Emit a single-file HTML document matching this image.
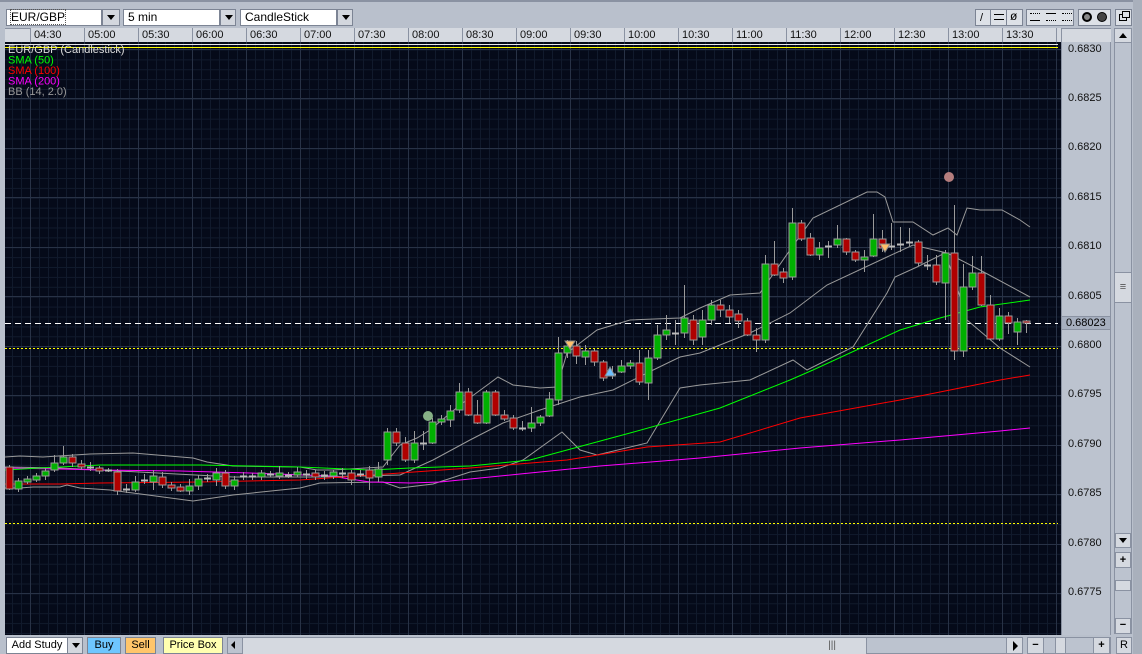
<!DOCTYPE html>
<html><head><meta charset="utf-8"><style>
*{margin:0;padding:0;box-sizing:border-box}
body{width:1142px;height:654px;background:#b9c0cc;font-family:"Liberation Sans",sans-serif;font-size:11px;color:#000;position:relative;overflow:hidden}
.a{position:absolute}
.box{position:absolute;background:#fff;border:1px solid #7c8494;padding-left:4px;line-height:15px;font-size:12px}
.arr{position:absolute;background:#d3d7de;border:1px solid #7c8494}
.arr:after{content:"";position:absolute;left:4px;top:5px;border-left:4px solid transparent;border-right:4px solid transparent;border-top:5px solid #000}
.btn{position:absolute;border:1px solid #7c8494;text-align:center;line-height:15px;font-size:11px}
.tl{position:absolute;top:28px;height:14px;border-left:1px solid #8a92a2;background:#d5d9e0;font-size:11px;line-height:14px;padding-left:3px;color:#111}
.pl{position:absolute;left:1068px;font-size:11px;color:#111}
</style></head><body>
<div class="a" style="left:0;top:0;width:1142px;height:2px;background:#8a92a2"></div>
<div class="a" style="left:1133px;top:0;width:9px;height:654px;background:#a9b0bc"></div>
<div class="box" style="left:6px;top:9px;width:96px;height:17px"><span style="outline:1px dotted #555">EUR/GBP</span></div>
<div class="arr" style="left:102px;top:9px;width:18px;height:17px"></div>
<div class="box" style="left:123px;top:9px;width:97px;height:17px">5 min</div>
<div class="arr" style="left:220px;top:9px;width:16px;height:17px"></div>
<div class="box" style="left:240px;top:9px;width:97px;height:17px">CandleStick</div>
<div class="arr" style="left:337px;top:9px;width:16px;height:17px"></div>
<div class="a" style="left:975px;top:9px;width:48px;height:17px;background:#dde1e7;border:1px solid #7c8494"></div>
<div class="a" style="left:990px;top:9px;width:1px;height:17px;background:#7c8494"></div>
<div class="a" style="left:1006px;top:9px;width:1px;height:17px;background:#7c8494"></div>
<div class="a" style="left:980px;top:12px;font-size:11px">/</div>
<div class="a" style="left:994px;top:14px;width:10px;border-top:1px solid #000;border-bottom:1px solid #000;height:6px"></div>
<div class="a" style="left:1010px;top:9px;font-size:12px">ø</div>
<div class="a" style="left:1026px;top:9px;width:48px;height:17px;background:#dde1e7;border:1px solid #7c8494"></div>
<div class="a" style="left:1030px;top:13px;width:10px;height:8px;border-top:1px dotted #000;border-bottom:1px solid #000"></div>
<div class="a" style="left:1046px;top:13px;width:10px;height:8px;border-top:1px solid #000;border-bottom:1px dotted #000"></div>
<div class="a" style="left:1062px;top:13px;width:10px;height:8px;border-top:1px dotted #000;border-bottom:1px dotted #000"></div>
<div class="a" style="left:1078px;top:9px;width:33px;height:17px;background:#dde1e7;border:1px solid #7c8494"></div>
<div class="a" style="left:1082px;top:12px;width:10px;height:10px;border-radius:50%;border:2px solid #000;background:#888"></div>
<div class="a" style="left:1097px;top:12px;width:10px;height:10px;border-radius:50%;border:1px solid #000;background:#444"></div>
<div class="a" style="left:1115px;top:9px;width:17px;height:17px;background:#dde1e7;border:1px solid #7c8494"></div>
<div class="a" style="left:1119px;top:14px;width:8px;height:7px;border:1px solid #000"></div>
<div class="a" style="left:1122px;top:11px;width:8px;height:7px;border:1px solid #000;background:#dde1e7"></div>
<div class="a" style="left:5px;top:28px;width:1106px;height:14px;background:#d5d9e0;border-top:1px solid #8a92a2"></div>
<div class="tl" style="left:30px;width:54px">04:30</div><div class="tl" style="left:84px;width:54px">05:00</div><div class="tl" style="left:138px;width:54px">05:30</div><div class="tl" style="left:192px;width:54px">06:00</div><div class="tl" style="left:246px;width:54px">06:30</div><div class="tl" style="left:300px;width:54px">07:00</div><div class="tl" style="left:354px;width:54px">07:30</div><div class="tl" style="left:408px;width:54px">08:00</div><div class="tl" style="left:462px;width:54px">08:30</div><div class="tl" style="left:516px;width:54px">09:00</div><div class="tl" style="left:570px;width:54px">09:30</div><div class="tl" style="left:624px;width:54px">10:00</div><div class="tl" style="left:678px;width:54px">10:30</div><div class="tl" style="left:732px;width:54px">11:00</div><div class="tl" style="left:786px;width:54px">11:30</div><div class="tl" style="left:840px;width:54px">12:00</div><div class="tl" style="left:894px;width:54px">12:30</div><div class="tl" style="left:948px;width:54px">13:00</div><div class="tl" style="left:1002px;width:54px">13:30</div><div class="tl" style="left:1056px;width:5px"></div>
<div class="a" style="left:1061px;top:28px;width:1px;height:14px;background:#8a92a2"></div>
<div class="a" style="left:1061px;top:42px;width:50px;height:593px;background:#bcc3cf;border-left:1px solid #8a92a2;border-right:1px solid #8a92a2"></div>
<div class="pl" style="top:43px">0.6830</div><div class="pl" style="top:92px">0.6825</div><div class="pl" style="top:141px">0.6820</div><div class="pl" style="top:191px">0.6815</div><div class="pl" style="top:240px">0.6810</div><div class="pl" style="top:290px">0.6805</div><div class="pl" style="top:339px">0.6800</div><div class="pl" style="top:388px">0.6795</div><div class="pl" style="top:438px">0.6790</div><div class="pl" style="top:487px">0.6785</div><div class="pl" style="top:537px">0.6780</div><div class="pl" style="top:586px">0.6775</div>
<div class="a" style="left:1062px;top:316px;width:48px;height:14px;background:#a6afbf;border-top:1px solid #8a92a2;border-bottom:1px solid #8a92a2;font-size:11px;line-height:12px;padding-left:4px">0.68023</div>
<div class="a" style="left:1114px;top:28px;width:18px;height:606px;background:#bcc3cf;border:1px solid #8a92a2"></div>
<div class="a" style="left:1115px;top:29px;width:16px;height:14px;background:#d5d9e0;border-bottom:1px solid #8a92a2"></div>
<div class="a" style="left:1119px;top:33px;border-left:4px solid transparent;border-right:4px solid transparent;border-bottom:5px solid #000"></div>
<div class="a" style="left:1115px;top:272px;width:16px;height:31px;background:#d5d9e0;border-top:1px solid #8a92a2;border-bottom:1px solid #8a92a2;text-align:center;line-height:28px;color:#555">≡</div>
<div class="a" style="left:1115px;top:533px;width:16px;height:15px;background:#d5d9e0;border:1px solid #8a92a2"></div>
<div class="a" style="left:1119px;top:538px;border-left:4px solid transparent;border-right:4px solid transparent;border-top:5px solid #000"></div>
<div class="a" style="left:1115px;top:552px;width:16px;height:16px;background:#d5d9e0;border:1px solid #8a92a2;text-align:center;font-weight:bold;line-height:14px">+</div>
<div class="a" style="left:1115px;top:580px;width:16px;height:11px;background:#d5d9e0;border:1px solid #8a92a2"></div>
<div class="a" style="left:1115px;top:618px;width:16px;height:16px;background:#d5d9e0;border:1px solid #8a92a2;text-align:center;font-weight:bold;line-height:13px">−</div>
<div class="btn" style="left:6px;top:637px;width:62px;height:17px;background:#fff">Add Study</div>
<div class="arr" style="left:67px;top:637px;width:16px;height:17px"></div>
<div class="btn" style="left:87px;top:637px;width:34px;height:17px;background:#6ec6ff">Buy</div>
<div class="btn" style="left:125px;top:637px;width:31px;height:17px;background:#ffc56a">Sell</div>
<div class="btn" style="left:163px;top:637px;width:60px;height:17px;background:#ffffb0">Price Box</div>
<div class="a" style="left:227px;top:637px;width:781px;height:17px;background:#bcc3cf;border:1px solid #8a92a2"></div>
<div class="a" style="left:242px;top:638px;width:625px;height:16px;background:#d5d9e0;border-right:1px solid #8a92a2;text-align:right;padding-right:30px;line-height:15px;color:#555;font-size:10px">|||</div>
<div class="a" style="left:231px;top:641px;border-top:4px solid transparent;border-bottom:4px solid transparent;border-right:4px solid #000"></div>
<div class="a" style="left:242px;top:637px;width:1px;height:17px;background:#8a92a2"></div>
<div class="a" style="left:1006px;top:637px;width:17px;height:17px;background:#d5d9e0;border:1px solid #8a92a2"></div>
<div class="a" style="left:1013px;top:641px;border-top:5px solid transparent;border-bottom:5px solid transparent;border-left:5px solid #000"></div>
<div class="a" style="left:1027px;top:637px;width:84px;height:17px;background:#bcc3cf;border:1px solid #8a92a2"></div>
<div class="a" style="left:1027px;top:637px;width:17px;height:17px;background:#d5d9e0;border:1px solid #8a92a2;text-align:center;font-weight:bold;line-height:14px">−</div>
<div class="a" style="left:1055px;top:637px;width:11px;height:17px;background:#d5d9e0;border:1px solid #8a92a2"></div>
<div class="a" style="left:1093px;top:637px;width:17px;height:17px;background:#d5d9e0;border:1px solid #8a92a2;text-align:center;font-weight:bold;line-height:14px">+</div>
<div class="a" style="left:1116px;top:637px;width:16px;height:17px;background:#d5d9e0;border:1px solid #8a92a2;text-align:center;line-height:15px">R</div>
<svg class="a" style="left:5px;top:42px" width="1056" height="593" viewBox="5 42 1056 593" id="ch">
<defs>
<pattern id="mg" x="3" y="0" width="9" height="9.89" patternUnits="userSpaceOnUse"><rect width="9" height="9.89" fill="#050a19"/><path d="M0.5 0V9.89M0 0.5H9" stroke="#111a2c" stroke-width="1"/></pattern>
</defs>
<rect x="5" y="42" width="1056" height="593" fill="url(#mg)"/>
<g id="maj" stroke="#283246" stroke-width="1"></g>
<line x1="5" y1="44.5" x2="1058" y2="44.5" stroke="#e8e8e8"/>
<line x1="5" y1="47.5" x2="1058" y2="47.5" stroke="#ffff00"/>
<line x1="5" y1="348.5" x2="1058" y2="348.5" stroke="#ffff00" stroke-dasharray="2,2"/>
<line x1="5" y1="523.5" x2="1058" y2="523.5" stroke="#ffff00" stroke-dasharray="2,2"/>
<line x1="5" y1="323.5" x2="1058" y2="323.5" stroke="#ffffff" stroke-dasharray="6,4"/>
<g fill="none" stroke-width="1">
<polyline stroke="#9a9a9a" points="5,457 20,456 43,457 90,454 133,453 193,458 207,462 233,466 300,467 317,470 333,470 383,467 400,445 417,438 430,430 460,405 490,383 498,377 513,385 540,388 557,387 567,353 597,330 630,320 680,318 700,308 730,295 760,293 790,250 813,218 867,192 877,192 885,197 893,222 913,222 933,235 948,228 957,235 967,208 980,210 1002,210 1020,220 1030,227"/>
<polyline stroke="#9a9a9a" points="5,467 60,468 100,470 233,477 320,477 400,475 433,460 470,440 503,423 540,410 580,397 613,390 647,373 680,357 700,353 750,333 790,313 827,285 887,257 913,245 947,253 980,270 1030,297"/>
<polyline stroke="#9a9a9a" points="5,488 20,488 33,487 60,487 67,485 80,488 110,490 133,493 193,501 233,495 300,488 320,483 383,482 400,488 433,484 470,472 500,468 523,460 562,432 580,450 597,455 647,443 680,388 700,385 720,383 750,380 793,360 807,370 853,347 887,293 895,277 917,267 945,253 957,287 967,320 1000,348 1030,367"/>
<polyline stroke="#ff00ff" points="5,468 60,469 100,470 180,471 250,473 330,476 370,482 410,483 440,482 480,478 520,474 600,466 700,458 800,448 900,440 1000,431 1030,428"/>
<polyline stroke="#ff0000" points="5,484 60,484 100,483 200,482 300,480 400,473 470,468 567,460 647,447 720,442 800,418 900,400 960,388 1000,380 1030,375"/>
<polyline stroke="#00ff00" points="5,470 40,468 100,465 200,465 300,467 370,470 410,468 470,466 530,460 630,433 720,408 790,380 813,370 900,330 940,318 980,307 1030,300"/>
</g>
<g id="cd"></g>
<circle cx="428" cy="416" r="5" fill="#86b086"/>
<circle cx="949" cy="177" r="5" fill="#b57d7d"/>
<polygon points="565,341 575,341 570,349" fill="#ffc06a" stroke="#888"/>
<polygon points="880,244 890,244 885,252" fill="#ffc06a" stroke="#888"/>
<polygon points="605,376 615,376 610,367" fill="#6ec0ff" stroke="#888"/>
<text x="8" y="53" fill="#dddddd" font-size="11">EUR/GBP (Candlestick)</text>
<text x="8" y="63.5" fill="#00ff00" font-size="11">SMA (50)</text>
<text x="8" y="74" fill="#ff0000" font-size="11">SMA (100)</text>
<text x="8" y="84.5" fill="#ff00ff" font-size="11">SMA (200)</text>
<text x="8" y="95" fill="#999999" font-size="11">BB (14, 2.0)</text>
</svg>
<script>
var maj=document.getElementById("maj"),s="";
for(var k=0;k<20;k++){var x=30.5+54*k;s+='<line x1="'+x+'" y1="42" x2="'+x+'" y2="635"/>';}
for(var k=0;k<12;k++){var y=Math.round(49+49.45*k)+0.5;s+='<line x1="5" y1="'+y+'" x2="1061" y2="'+y+'"/>';}
maj.innerHTML=s;
var d=[["r",467,489,465,490],["g",481,489,478,492],["g",479,482,476,484],["g",476,480,473,482],["g",471,476,468,480],["g",463,470,455,472],["g",457,463,446,465],["r",457,463,454,467],["r",464,467,460,470],["n",467,467,462,471],["r",468,471,466,474],["n",470,470,468,472],["r",472,491,469,495],["n",489,491,484,493],["g",482,490,476,492],["n",480,480,474,484],["g",476,482,470,490],["r",477,485,472,488],["r",485,488,482,491],["r",487,491,484,492],["g",486,491,479,495],["g",479,486,475,490],["n",478,478,474,482],["g",473,480,468,486],["r",473,486,470,489],["g",480,486,476,490],["n",476,476,472,480],["n",476,476,473,480],["g",473,477,470,480],["n",474,474,471,477],["g",473,476,466,479],["n",475,475,472,478],["g",472,475,467,477],["n",474,474,470,479],["r",473,477,470,480],["n",475,475,471,480],["g",472,476,470,479],["n",473,473,468,478],["r",473,480,470,485],["n",474,474,470,477],["r",470,478,466,490],["g",469,477,462,482],["g",432,460,428,465],["r",432,443,428,446],["r",443,460,437,462],["g",443,460,431,463],["n",443,443,431,450],["g",422,443,418,444],["g",419,422,415,425],["g",411,420,405,427],["g",392,410,383,413],["r",392,415,388,416],["r",415,423,400,424],["g",392,423,390,424],["r",392,415,390,416],["r",415,419,410,421],["r",418,428,415,430],["n",428,428,421,431],["g",423,428,407,432],["g",417,423,415,426],["g",399,416,392,417],["g",353,400,337,405],["g",346,353,340,358],["r",346,356,341,364],["g",351,357,345,365],["r",351,362,349,366],["r",362,378,360,381],["n",374,374,366,379],["g",366,372,360,373],["g",363,366,360,369],["r",363,382,350,385],["g",358,383,350,400],["g",335,358,325,360],["g",330,335,315,340],["n",333,333,320,345],["g",318,333,285,338],["r",320,340,315,345],["g",320,337,310,345],["g",305,320,300,325],["r",305,310,300,317],["r",310,317,305,323],["r",314,321,310,328],["r",321,335,318,336],["r",335,340,328,352],["g",264,340,255,343],["r",264,275,241,276],["r",272,278,268,283],["g",223,277,208,280],["r",223,239,220,241],["r",238,255,233,256],["g",248,255,242,260],["n",246,246,241,258],["g",239,245,225,248],["r",239,252,238,255],["r",252,260,250,262],["g",257,260,250,272],["g",239,256,214,257],["r",239,248,230,252],["n",246,246,223,250],["n",244,244,227,252],["n",242,242,228,246],["r",242,263,240,266],["n",265,265,255,270],["r",265,282,255,285],["g",253,283,250,320],["r",253,351,205,360],["g",287,351,264,357],["g",273,287,256,290],["r",273,305,256,306],["r",305,339,295,340],["g",316,339,308,341],["r",316,323,312,334],["g",322,332,318,345],["r",321,323,320,333]];
var h="";
for(var i=0;i<d.length;i++){var c=d[i],x=9+9*i;
h+='<line x1="'+(x+0.5)+'" y1="'+c[3]+'" x2="'+(x+0.5)+'" y2="'+c[4]+'" stroke="#9a9a9a"/>';
if(c[0]=="n"){h+='<line x1="'+(x-3)+'" y1="'+(c[1]+0.5)+'" x2="'+(x+4)+'" y2="'+(c[1]+0.5)+'" stroke="#bbbbbb" stroke-width="2"/>';}
else{var f=c[0]=="g"?"#00b000":"#b00000";var hh=Math.max(c[2]-c[1],2);h+='<rect x="'+(x-3)+'" y="'+c[1]+'" width="7" height="'+hh+'" fill="'+f+'" stroke="#9a9a9a"/>';}
}
document.getElementById("cd").innerHTML=h;
</script>
</body></html>
